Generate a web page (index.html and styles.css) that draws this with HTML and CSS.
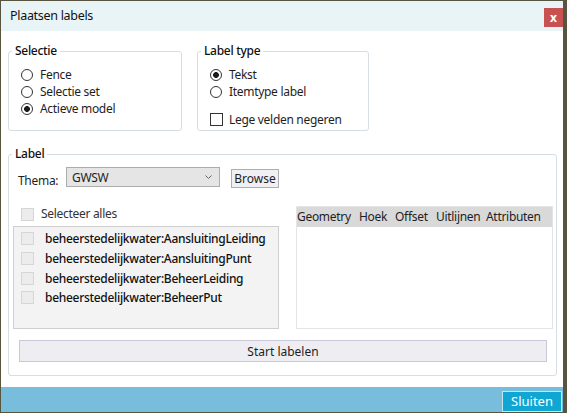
FILE: index.html
```html
<!DOCTYPE html>
<html lang="nl">
<head>
<meta charset="utf-8">
<title>Plaatsen labels</title>
<link rel="stylesheet" href="styles.css">
</head>
<body>
<div class="window">
  <div class="titlebar">
    <span class="title">Plaatsen labels</span>
    <button class="close">x</button>
  </div>
  <div class="content">
    <div class="top-row">
      <fieldset class="group selectie">
        <legend>Selectie</legend>
        <label class="opt"><input type="radio" name="sel" class="radio"><span>Fence</span></label>
        <label class="opt"><input type="radio" name="sel" class="radio"><span>Selectie set</span></label>
        <label class="opt"><input type="radio" name="sel" class="radio" checked><span>Actieve model</span></label>
      </fieldset>
      <fieldset class="group labeltype">
        <legend>Label type</legend>
        <label class="opt"><input type="radio" name="lt" class="radio" checked><span>Tekst</span></label>
        <label class="opt"><input type="radio" name="lt" class="radio"><span>Itemtype label</span></label>
        <label class="opt opt-check"><input type="checkbox" class="check"><span>Lege velden negeren</span></label>
      </fieldset>
    </div>
    <fieldset class="group label-group">
      <legend>Label</legend>
      <div class="thema-row">
        <span class="thema-label">Thema:</span>
        <div class="combo">
          <span>GWSW</span>
          <svg class="chev" width="7" height="4" viewBox="0 0 7 4"><polyline points="0.5,0.5 3.5,3.5 6.5,0.5" fill="none" stroke="#666" stroke-width="1"/></svg>
        </div>
        <button class="browse">Browse</button>
      </div>
      <div class="lists">
        <div class="left-col">
          <label class="check-all"><input type="checkbox" class="check" disabled><span>Selecteer alles</span></label>
          <div class="listbox">
            <label class="item"><input type="checkbox" class="check" disabled><span>beheerstedelijkwater:AansluitingLeiding</span></label>
            <label class="item"><input type="checkbox" class="check" disabled><span>beheerstedelijkwater:AansluitingPunt</span></label>
            <label class="item"><input type="checkbox" class="check" disabled><span>beheerstedelijkwater:BeheerLeiding</span></label>
            <label class="item"><input type="checkbox" class="check" disabled><span>beheerstedelijkwater:BeheerPut</span></label>
          </div>
        </div>
        <div class="grid">
          <div class="grid-head">
            <span class="col c-geo">Geometry</span>
            <span class="col c-hoek">Hoek</span>
            <span class="col c-off">Offset</span>
            <span class="col c-uit">Uitlijnen</span>
            <span class="col c-attr">Attributen</span>
          </div>
        </div>
      </div>
      <button class="start">Start labelen</button>
    </fieldset>
  </div>
  <div class="footer">
    <button class="sluiten">Sluiten</button>
  </div>
</div>
</body>
</html>
```
FILE: styles.css
```css
* { box-sizing: border-box; }

body {
  margin: 0;
  background: #57543f;
  font-family: "Noto Sans", "Open Sans", sans-serif;
  font-size: 12px;
  letter-spacing: -0.3px;
  color: #1e1e1e;
}

.window {
  margin: 1px 0 0 1px;
  width: 562px;
  height: 411px;
  background: #fff;
  display: flex;
  flex-direction: column;
}

.titlebar {
  height: 30px;
  flex: none;
  background: #e8f4f6;
  display: flex;
  align-items: flex-start;
}

.title {
  padding-left: 9px;
  line-height: 30px;
  font-size: 12.5px;
  color: #111;
}

.close {
  margin-left: auto;
  margin-top: 7px;
  width: 19px;
  height: 19px;
  padding: 0;
  border: 0;
  background: #c85151;
  color: #fff;
  font: bold 12px/17px "Noto Sans", sans-serif;
}

.content {
  flex: 1;
  padding: 12px 6px 0 7px;
}

.top-row {
  display: flex;
  gap: 15px;
}

.group {
  margin: 0;
  padding: 0;
  border: 1px solid #d6dee3;
  border-radius: 3px;
  min-width: 0;
}

.group legend {
  margin-left: 3px;
  padding: 0 3px;
  font-weight: 500;
  line-height: 16px;
  color: #111;
}

.selectie {
  width: 174px;
  padding: 7px 0 13px 12px;
}

.labeltype {
  width: 172px;
  padding: 7px 0 2px 12px;
}

.selectie legend,
.labeltype legend {
  margin-left: -9px;
}

.opt {
  display: flex;
  align-items: center;
  height: 17px;
  gap: 7px;
}

.radio {
  appearance: none;
  margin: 0;
  width: 12px;
  height: 12px;
  border: 1px solid #333;
  border-radius: 50%;
  background: #fff;
  flex: none;
}

.radio:checked {
  background: radial-gradient(circle, #1a1a1a 0 2.6px, #fff 3.2px);
}

.check {
  appearance: none;
  margin: 0;
  width: 13px;
  height: 13px;
  border: 1px solid #333;
  background: #fff;
  flex: none;
}

.check:disabled {
  border-color: #d6d6d6;
  background: #ececec;
}

.opt-check {
  margin-top: 11px;
  gap: 6px;
}

.label-group {
  margin-top: 15px;
  width: 549px;
  padding: 0 0 13px 0;
}

.thema-row {
  display: flex;
  align-items: flex-start;
  margin-top: 5px;
  padding-left: 9px;
}

.thema-label {
  width: 48px;
  margin-top: 6px;
  line-height: 16px;
}

.combo {
  width: 154px;
  height: 20px;
  border: 1px solid #acacac;
  background: #e5e5e5;
  display: flex;
  align-items: center;
  justify-content: space-between;
  padding: 0 7px 0 5px;
}

.browse {
  margin-left: 11px;
  margin-top: 2px;
  width: 48px;
  height: 19px;
  padding: 0;
  border: 1px solid #adadad;
  background: #efeff4;
  font: inherit;
  line-height: 17px;
  color: #1e1e1e;
}

.lists {
  display: flex;
  gap: 17px;
  margin-top: 17px;
  padding: 0 3px 0 4px;
}

.left-col {
  width: 266px;
  display: flex;
  flex-direction: column;
}

.check-all {
  display: flex;
  align-items: flex-start;
  height: 20px;
  padding-left: 8px;
  gap: 7px;
  line-height: 16px;
  color: #333;
}

.check-all .check {
  margin-top: 2px;
}

.listbox {
  height: 103px;
  border: 1px solid #cfcfcf;
  background: #f3f3f3;
  padding: 2px 0 0 7px;
}

.item {
  display: flex;
  align-items: center;
  height: 19.67px;
  gap: 11px;
  color: #111;
  font-weight: 500;
}

.grid {
  width: 257px;
  height: 123px;
  border: 1px solid #e5e5e5;
}

.grid-head {
  display: flex;
  height: 20px;
  align-items: center;
  background: #d9d9d9;
  line-height: 16px;
}

.c-geo { width: 62px; }
.c-hoek { width: 36px; }
.c-off { width: 41px; }
.c-uit { width: 50px; }
.c-attr { flex: 1; }

.start {
  display: block;
  margin: 11px 9px 0 10px;
  width: 528px;
  height: 22px;
  padding: 0;
  border: 1px solid #c8c8d8;
  background: #ededf2;
  font: inherit;
  color: #1e1e1e;
}

.footer {
  height: 25px;
  flex: none;
  background: #79bddd;
  display: flex;
  justify-content: flex-end;
  align-items: flex-end;
}

.sluiten {
  width: 60px;
  height: 21px;
  margin-right: 1px;
  padding: 0;
  border: 1px solid #c4e6f2;
  background: #10a6d3;
  color: #fff;
  font: 13px/19px "Noto Sans", sans-serif;
  letter-spacing: 0;
}
```
